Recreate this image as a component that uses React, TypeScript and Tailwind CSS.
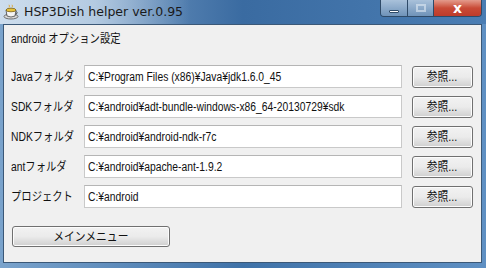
import React from 'react';

const rows = [
  { label: 'Javaフォルダ', value: 'C:¥Program Files (x86)¥Java¥jdk1.6.0_45' },
  { label: 'SDKフォルダ', value: 'C:¥android¥adt-bundle-windows-x86_64-20130729¥sdk' },
  { label: 'NDKフォルダ', value: 'C:¥android¥android-ndk-r7c' },
  { label: 'antフォルダ', value: 'C:¥android¥apache-ant-1.9.2' },
  { label: 'プロジェクト', value: 'C:¥android' },
];

const uiFont = { fontFamily: '"Liberation Sans", "Noto Sans CJK JP", sans-serif' };

function CupIcon() {
  return (
    <svg width="16" height="16" viewBox="0 0 16 16">
      <ellipse cx="8" cy="12.5" rx="7" ry="2.5" fill="#d8d8d8" stroke="#555" strokeWidth="0.8" />
      <path d="M3 6 L13 6 L12 12 Q8 14 4 12 Z" fill="#f4f4f4" stroke="#444" strokeWidth="0.8" />
      <ellipse cx="8" cy="6" rx="5" ry="1.8" fill="#e8c23a" stroke="#6b5310" strokeWidth="0.7" />
      <path d="M13 7.5 Q15.5 8 13 10.5" fill="none" stroke="#444" strokeWidth="0.9" />
      <path d="M6 3.5 Q7 2 6 0.8 M9 3.5 Q10 2 9 0.8" fill="none" stroke="#e0a020" strokeWidth="0.8" />
    </svg>
  );
}

// narrow text like the Windows UI font
function Txt({ children }: { children: React.ReactNode }) {
  return <span className="inline-block origin-left scale-x-[0.86] whitespace-nowrap">{children}</span>;
}

function WinButton({ children, className }: { children: React.ReactNode; className: string }) {
  return (
    <div
      className={`flex items-center justify-center whitespace-nowrap rounded-[3px] border border-[#707070] bg-gradient-to-b from-[#f2f2f2] via-[#ebebeb] to-[#cfcfcf] text-[12px] text-[#111] shadow-[inset_0_0_0_1px_#fcfcfc] ${className}`}
    >
      <span className="inline-block scale-x-[0.9]">{children}</span>
    </div>
  );
}

export default function App() {
  return (
    <div
      className="flex h-[268px] w-[486px] flex-col overflow-hidden bg-gradient-to-r from-[#7aa3cc] via-[#3f72a8] to-[#5f90c3]"
      style={uiFont}
    >
      {/* title bar */}
      <div className="relative flex h-[24px] shrink-0 items-center bg-gradient-to-r from-[#94b4d4] via-[#3a6ba1] to-[#4a7db3]">
        <div className="absolute left-0 top-0 h-[24px] w-[190px] bg-gradient-to-r from-[#dbe7f3]/80 via-[#d0e0ef]/70 to-transparent" />
        <div className="relative ml-[3px] flex items-center gap-[5px]">
          <CupIcon />
          <span className="text-[#1a1a1a]" style={{ fontFamily: '"DejaVu Sans", "Noto Sans CJK JP", sans-serif', fontSize: '12.5px' }}>
            HSP3Dish helper ver.0.95
          </span>
        </div>
        <div className="absolute right-[4px] top-0 flex h-[17px] overflow-hidden rounded-b-[4px] border border-t-0 border-[#2e4a68]">
          <div className="flex w-[27px] items-center justify-center border-r border-[#2e4a68] bg-gradient-to-b from-[#a9c1da] to-[#6f93b9]">
            <div className="mt-[6px] h-[3px] w-[10px] rounded-[1px] border border-[#2e4a68] bg-white" />
          </div>
          <div className="flex w-[26px] items-center justify-center border-r border-[#2e4a68] bg-gradient-to-b from-[#a9c1da] to-[#6f93b9]">
            <div className="h-[8px] w-[10px] border-2 border-[#dfe9f3] opacity-60" />
          </div>
          <div className="flex w-[47px] items-center justify-center bg-gradient-to-b from-[#e39a8c] via-[#c94a36] to-[#bd3b2b]">
            <span className="text-[14px] font-bold leading-none text-white" style={{ fontFamily: '"DejaVu Sans", sans-serif' }}>
              x
            </span>
          </div>
        </div>
      </div>

      {/* client area */}
      <div className="ml-[3px] mr-[4px] flex flex-1 flex-col border border-[#3b5877] bg-[#f0f0f0] pl-[7px]">
        <div className="mt-[5px] text-[12px] text-[#111]">
          <Txt>android オプション設定</Txt>
        </div>
        <div className="mt-[17px] flex flex-col gap-[7px]">
          {rows.map((r) => (
            <div key={r.label} className="flex h-[23px] items-center">
              <div className="w-[73px] text-[12px] text-[#111]">
                <Txt>{r.label}</Txt>
              </div>
              <div className="flex h-[23px] w-[318px] items-center overflow-hidden border border-[#c9c9c9] border-t-[#b5b5b5] bg-white pl-[3px] text-[12px] text-[#111]">
                <Txt>{r.value}</Txt>
              </div>
              <WinButton className="ml-[10px] h-[22px] w-[61px]">参照...</WinButton>
            </div>
          ))}
        </div>
        <WinButton className="ml-[1px] mt-[18px] h-[21px] w-[158px]">メインメニュー</WinButton>
      </div>
      <div className="h-[5px] shrink-0" />
    </div>
  );
}
